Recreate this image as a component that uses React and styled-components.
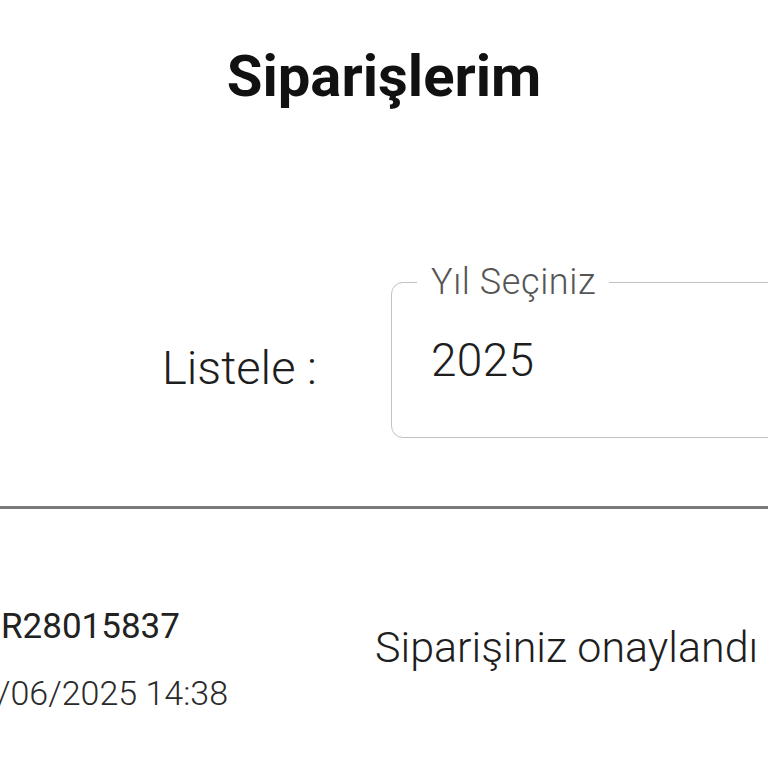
import React from "react";
import styled, { createGlobalStyle } from "styled-components";

const GlobalStyle = createGlobalStyle`
  html, body {
    margin: 0;
    padding: 0;
    background: #ffffff;
  }
  body {
    font-family: Roboto, "Noto Sans", "Liberation Sans", sans-serif;
    color: #1f1f1f;
  }
`;

const orders = [
  {
    id: "R28015837",
    date: "/06/2025 14:38",
    status: "Siparişiniz onaylandı",
  },
];

function App() {
  return (
    <>
      <GlobalStyle />
      <Page>
        <Title>Siparişlerim</Title>
        <FilterRow>
          <FilterLabel>Listele :</FilterLabel>
          <SelectBox>
            <SelectLegend>Yıl Seçiniz</SelectLegend>
            <SelectValue>2025</SelectValue>
          </SelectBox>
        </FilterRow>
        <Divider />
        <OrderList>
          {orders.map((order) => (
            <OrderRow key={order.id}>
              <OrderInfo>
                <OrderNo>{order.id}</OrderNo>
                <OrderDate>{order.date}</OrderDate>
              </OrderInfo>
              <OrderStatus>{order.status}</OrderStatus>
            </OrderRow>
          ))}
        </OrderList>
      </Page>
    </>
  );
}

const Page = styled.div`
  width: 768px;
  height: 768px;
  overflow: hidden;
  background: #ffffff;
`;

const Title = styled.h1`
  margin: 0;
  padding-top: 44px;
  text-align: center;
  font-size: 58px;
  font-weight: 700;
  line-height: 64px;
  color: #111111;
`;

const FilterRow = styled.div`
  display: flex;
  align-items: center;
  margin-top: 156px;
  padding-left: 162px;
`;

const FilterLabel = styled.span`
  width: 229px;
  flex-shrink: 0;
  font-size: 47px;
  font-weight: 300;
  line-height: 48px;
  color: #1e1e1e;
  margin-top: 34px;
`;

const SelectBox = styled.fieldset`
  flex-shrink: 0;
  width: 520px;
  height: 174px;
  margin: 0;
  padding: 0 0 0 41px;
  border: 1.5px solid #c2c2c2;
  border-radius: 12px;
  box-sizing: border-box;
  min-width: 0;
`;

const SelectLegend = styled.legend`
  margin-left: -16px;
  padding: 0 13px 0 14px;
  font-size: 36px;
  font-weight: 300;
  letter-spacing: 0.6px;
  line-height: 36px;
  color: #555555;
`;

const SelectValue = styled.div`
  margin-left: -2px;
  padding-top: 36px;
  font-size: 46px;
  font-weight: 300;
  letter-spacing: 0.3px;
  line-height: 48px;
  color: #1e1e1e;
`;

const Divider = styled.hr`
  margin: 68px 0 0;
  border: none;
  height: 3px;
  background: #7a7a7a;
`;

const OrderList = styled.div`
  padding-top: 98px;
`;

const OrderRow = styled.div`
  display: flex;
  align-items: flex-start;
`;

const OrderInfo = styled.div`
  display: flex;
  flex-direction: column;
  gap: 26px;
  width: 375px;
  flex-shrink: 0;
`;

const OrderNo = styled.span`
  padding-left: 1px;
  font-size: 35px;
  line-height: 40px;
  font-weight: 400;
  color: #222222;
`;

const OrderDate = styled.span`
  margin-left: -3px;
  font-size: 34px;
  font-weight: 300;
  line-height: 40px;
  color: #2a2a2a;
`;

const OrderStatus = styled.span`
  margin-top: 18px;
  font-size: 43px;
  font-weight: 300;
  line-height: 44px;
  color: #1e1e1e;
  white-space: nowrap;
`;

export default App;
